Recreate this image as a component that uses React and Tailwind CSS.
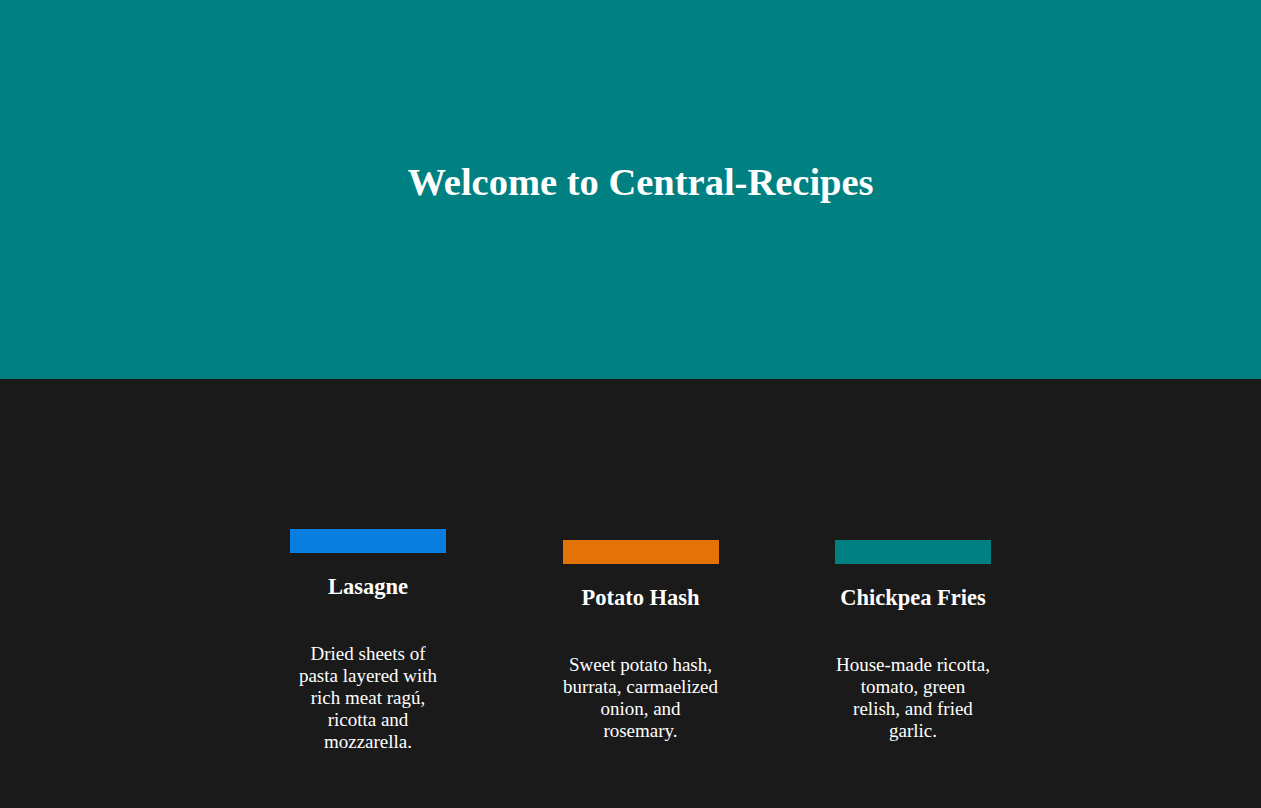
import React from 'react';

const recipes = [
  {
    name: 'Lasagne',
    color: 'bg-[#087fe0]',
    text: 'Dried sheets of pasta layered with rich meat ragú, ricotta and mozzarella.',
  },
  {
    name: 'Potato Hash',
    color: 'bg-[#e37307]',
    text: 'Sweet potato hash, burrata, carmaelized onion, and rosemary.',
  },
  {
    name: 'Chickpea Fries',
    color: 'bg-[#008080]',
    text: 'House-made ricotta, tomato, green relish, and fried garlic.',
  },
];

const RecipeCard = ({ name, color, text }) => (
  <div className="w-[156px] flex flex-col items-center text-center">
    <div className={`w-full h-[24px] ${color}`} />
    <h2 className="mt-[20px] text-[22.5px] leading-[28px] font-bold text-white">{name}</h2>
    <p className="mt-[42px] text-[19px] leading-[22px] text-white">{text}</p>
  </div>
);

export default function App() {
  return (
    <div className="min-h-screen bg-[#1a1a1a] font-['Liberation_Serif',serif]">
      {/* Hero */}
      <header className="h-[379px] bg-[#008080] flex items-center justify-center pl-[20px]">
        <h1 className="text-[38.5px] font-bold text-white -mt-[14px]">Welcome to Central-Recipes</h1>
      </header>

      {/* Recipes */}
      <section className="min-h-[429px] pt-[94px] pl-[20px] flex items-center justify-center gap-[116.5px]">
        {recipes.map((r) => (
          <RecipeCard key={r.name} {...r} />
        ))}
      </section>
    </div>
  );
}
